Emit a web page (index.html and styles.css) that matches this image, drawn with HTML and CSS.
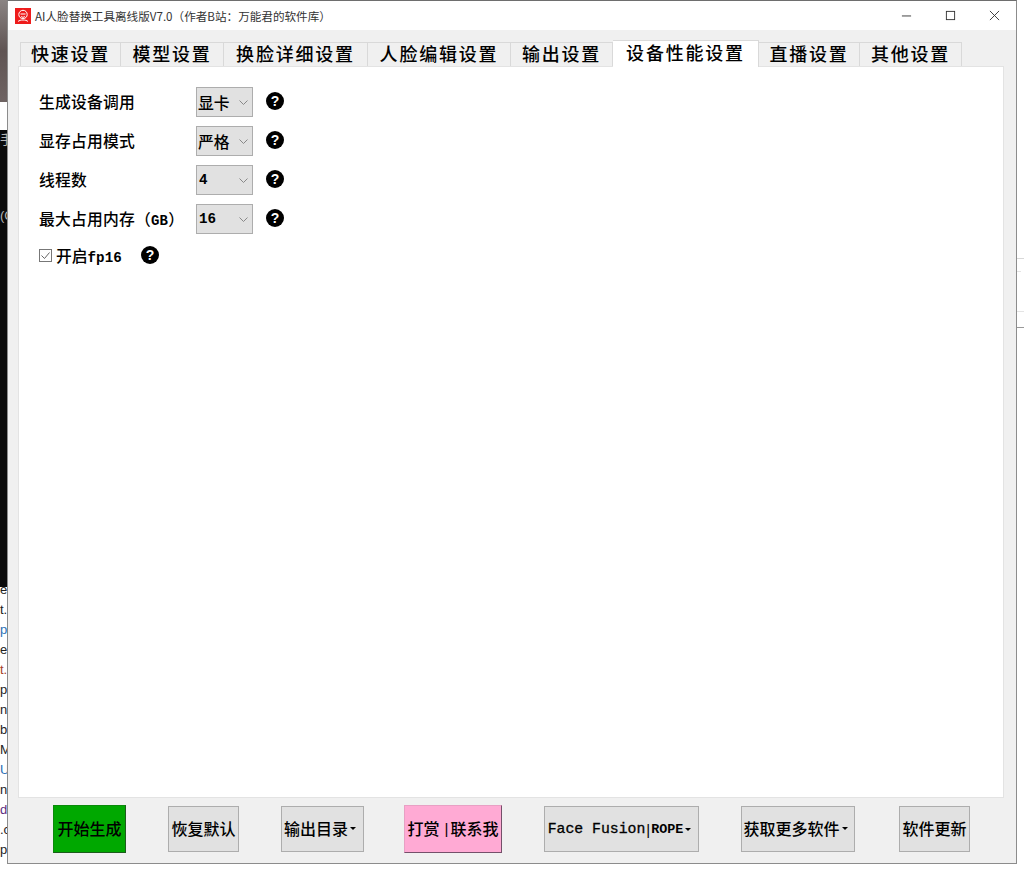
FILE: index.html
```html
<!DOCTYPE html>
<html lang="zh-CN">
<head>
<meta charset="utf-8">
<title>AI人脸替换工具离线版V7.0</title>
<link rel="stylesheet" href="styles.css">
</head>
<body>
<div class="desktop">
  <div class="strip">
    <div class="strip-top"></div>
    <div class="strip-white"></div>
    <div class="strip-black"><span>手</span><span class="gap">(C</span></div>
    <div class="strip-text">
      <span>e.</span><span>t.</span><span class="blue">p</span><span>e</span><span class="red">t.</span><span>pa</span><span>n.</span><span>bo</span><span>M</span><span class="blue">U</span><span>nt</span><span class="purple">dl</span><span>.c</span><span>p</span>
    </div>
  </div>
  <div class="side-lines">
    <i class="l1"></i><i class="l2"></i><i class="l3"></i><i class="l4"></i>
  </div>
</div>

<main class="window">
  <header class="titlebar">
    <svg class="app-icon" viewBox="0 0 16 16" aria-hidden="true">
      <rect width="16" height="16" fill="#ee1c1c"/>
      <circle cx="8" cy="6.5" r="4.2" fill="none" stroke="#fff" stroke-width="1"/>
      <path d="M5.5 6h5M6 8.5c1.2 1 2.8 1 4 0M3 13.5c2-2 8-2 10 0" fill="none" stroke="#fff" stroke-width="1"/>
    </svg>
    <span class="title">AI人脸替换工具离线版V7.0（作者B站：万能君的软件库）</span>
    <div class="controls">
      <svg viewBox="0 0 12 12"><path d="M1 6.5h10" stroke="#333" fill="none"/></svg>
      <svg viewBox="0 0 12 12"><rect x="1.5" y="1.5" width="9" height="9" stroke="#333" fill="none"/></svg>
      <svg viewBox="0 0 12 12"><path d="M1 1l10 10M11 1L1 11" stroke="#333" fill="none"/></svg>
    </div>
  </header>

  <div class="body">
    <nav class="tabs">
      <span class="tab w1">快速设置</span>
      <span class="tab w2">模型设置</span>
      <span class="tab w3">换脸详细设置</span>
      <span class="tab w4">人脸编辑设置</span>
      <span class="tab w5">输出设置</span>
      <span class="tab active">设备性能设置</span>
      <span class="tab w7">直播设置</span>
      <span class="tab w8">其他设置</span>
    </nav>

    <section class="panel">
      <div class="row">
        <span class="label">生成设备调用</span>
        <div class="select"><span>显卡</span><svg viewBox="0 0 9 5"><path d="M.5.5l4 4 4-4" fill="none" stroke="#888"/></svg></div>
        <span class="help">?</span>
      </div>
      <div class="row">
        <span class="label">显存占用模式</span>
        <div class="select"><span>严格</span><svg viewBox="0 0 9 5"><path d="M.5.5l4 4 4-4" fill="none" stroke="#888"/></svg></div>
        <span class="help">?</span>
      </div>
      <div class="row">
        <span class="label">线程数</span>
        <div class="select"><span class="num">4</span><svg viewBox="0 0 9 5"><path d="M.5.5l4 4 4-4" fill="none" stroke="#888"/></svg></div>
        <span class="help">?</span>
      </div>
      <div class="row">
        <span class="label">最大占用内存（<span class="mono-sm">GB</span>）</span>
        <div class="select"><span class="num">16</span><svg viewBox="0 0 9 5"><path d="M.5.5l4 4 4-4" fill="none" stroke="#888"/></svg></div>
        <span class="help">?</span>
      </div>
      <div class="check-row">
        <svg class="checkbox" viewBox="0 0 13 13"><rect x=".5" y=".5" width="12" height="12" fill="#fff" stroke="#777"/><path d="M2.5 6.5l3 3 5-6" fill="none" stroke="#666"/></svg>
        <span class="check-label">开启<span class="mono">fp16</span></span>
        <span class="help">?</span>
      </div>
    </section>

    <footer class="actions">
      <button class="btn start">开始生成</button>
      <button class="btn b-restore">恢复默认</button>
      <button class="btn b-output">输出目录<i class="caret"></i></button>
      <button class="btn pink">打赏<span class="bar">|</span>联系我</button>
      <button class="btn b-face"><span class="mono">Face Fusion</span><span class="bar">|</span><span class="rope">ROPE</span><i class="caret"></i></button>
      <button class="btn b-more">获取更多软件<i class="caret"></i></button>
      <button class="btn b-update">软件更新</button>
    </footer>
  </div>
</main>
</body>
</html>
```

FILE: styles.css
```css
* { box-sizing: border-box; }

html, body {
  margin: 0;
  height: 871px;
  overflow: hidden;
  background: #fff;
  font-family: "Noto Sans CJK SC", "Liberation Serif", sans-serif;
  color: #000;
}

.desktop { position: absolute; inset: 0; }

.strip {
  position: absolute;
  left: 0;
  top: 0;
  width: 8px;
  height: 863px;
  display: flex;
  flex-direction: column;
  overflow: hidden;
}
.strip-top {
  height: 102px;
  background: linear-gradient(#8a8483, #5f5453 50%, #6e6362);
  flex: none;
}
.strip-white { height: 28px; background: #fff; flex: none; }
.strip-black {
  height: 457px;
  flex: none;
  background: #0b0b0b;
  color: #b5b5b5;
  font: 13px/16px "Liberation Sans", sans-serif;
  padding-top: 2px;
  display: flex;
  flex-direction: column;
}
.strip-black .gap { margin-top: 60px; }
.strip-text {
  flex: 1;
  display: flex;
  flex-direction: column;
  font: 13px/20px "Liberation Sans", sans-serif;
  color: #222;
  margin-top: -7px;
}
.strip-text span { white-space: nowrap; }
.strip-text .blue { color: #2a6fb5; }
.strip-text .red { color: #a5402a; }
.strip-text .purple { color: #5b2a80; }

.side-lines i {
  position: absolute;
  left: 1017px;
  width: 7px;
  height: 1px;
  background: #e4e4e4;
}
.side-lines .l1 { top: 258px; background: #d8d8d8; }
.side-lines .l2 { top: 271px; width: 4px; }
.side-lines .l3 { top: 311px; }
.side-lines .l4 { top: 327px; background: #999; }

.window {
  position: absolute;
  left: 7px;
  top: 0;
  width: 1010px;
  height: 864px;
  background: #f0f0f0;
  border: 1px solid #8c8c8c;
  border-top-color: #6e6e6e;
  display: flex;
  flex-direction: column;
}

.titlebar {
  height: 29px;
  flex: none;
  background: #fff;
  display: flex;
  align-items: center;
  padding-left: 7px;
}
.app-icon { width: 16px; height: 16px; flex: none; }
.title {
  margin-left: 4px;
  font-size: 11.6px;
  line-height: 26px;
  color: #333;
  font-family: "Noto Sans CJK SC", "Liberation Sans", sans-serif;
  white-space: nowrap;
}
.controls {
  margin-left: auto;
  display: flex;
  gap: 33px;
  padding-right: 16px;
  align-items: center;
}
.controls svg { width: 11px; height: 11px; display: block; }

.body { flex: 1; display: flex; flex-direction: column; min-height: 0; }

.tabs {
  display: flex;
  align-items: flex-end;
  height: 36px;
  padding-left: 12px;
  position: relative;
  z-index: 1;
  flex: none;
}
.tab {
  height: 24px;
  background: #f0f0f0;
  border: 1px solid #d9d9d9;
  border-bottom: 0;
  border-left-width: 0;
  font-size: 18px;
  line-height: 20px;
  letter-spacing: 1.8px;
  font-weight: 500;
  text-align: center;
  white-space: nowrap;
}
.tab.w1 { width: 101px; border-left-width: 1px; }
.tab.w2 { width: 103px; }
.tab.w3 { width: 144px; }
.tab.w4 { width: 143px; }
.tab.w5 { width: 102px; }
.tab.active {
  width: 146px;
  height: 27px;
  background: #fff;
  margin-bottom: -1px;
  line-height: 23px;
}
.tab.w7 { width: 101px; }
.tab.w8 { width: 102px; }

.panel {
  width: 986px;
  height: 732px;
  margin-left: 10px;
  background: #fff;
  border: 1px solid #e3e3e3;
  padding: 20px 0 0 20px;
  flex: none;
}

.row {
  display: flex;
  align-items: center;
  height: 30px;
  margin-bottom: 9px;
}
.label {
  width: 157px;
  padding-bottom: 2px;
  font-size: 15.8px;
  font-weight: 500;
  letter-spacing: .2px;
  white-space: nowrap;
  flex: none;
}
.mono-sm { font: bold 14px "Liberation Mono", monospace; }

.select {
  width: 57px;
  height: 30px;
  background: #e1e1e1;
  border: 1px solid #adadad;
  display: flex;
  align-items: center;
  justify-content: space-between;
  padding: 0 4px 0 1px;
  font-size: 15.8px;
  font-weight: 500;
  flex: none;
}
.select svg { width: 9px; height: 5px; flex: none; }
.select .num { font: bold 14.2px "Liberation Mono", monospace; margin-left: 1px; }

.help {
  width: 18px;
  height: 18px;
  border-radius: 50%;
  background: #000;
  color: #fff;
  font: bold 14px/18px "Liberation Sans", sans-serif;
  text-align: center;
  margin-left: 13px;
  margin-top: -2px;
  flex: none;
}

.check-row {
  display: flex;
  align-items: center;
  height: 24px;
  margin-top: 4px;
}
.checkbox { width: 13px; height: 13px; flex: none; }
.check-label {
  margin-left: 4px;
  font-size: 15.8px;
  font-weight: 500;
  width: 71px;
  white-space: nowrap;
  flex: none;
}
.check-row .help { margin-left: 14px; margin-top: -1px; }
.mono { font: bold 14.2px "Liberation Mono", monospace; }

.actions {
  display: flex;
  align-items: center;
  height: 62px;
  padding-left: 45px;
  flex: none;
}
.btn {
  height: 46px;
  background: #e1e1e1;
  border: 1px solid #adadad;
  padding: 0 0 2px;
  font-family: inherit;
  font-size: 16px;
  font-weight: 500;
  color: #000;
  display: flex;
  align-items: center;
  justify-content: center;
  white-space: nowrap;
  flex: none;
}
.btn.start {
  width: 73px;
  height: 48px;
  background: #00a800;
  border: 1px solid #0a8a0a;
  border-right-color: #1c5c1c;
  border-bottom-color: #1c5c1c;
}
.b-restore { width: 71px; margin-left: 42px; }
.btn.b-output { width: 83px; margin-left: 42px; padding-right: 5px; }
.btn.pink {
  width: 98px;
  height: 48px;
  margin-left: 40px;
  background: #ffaad4;
  border: 1px solid #e8a0c4;
  border-right-color: #74506a;
  border-bottom-color: #74506a;
}
.btn.b-face { width: 155px; margin-left: 42px; padding: 0 4px 0 0; }
.btn.b-more { width: 114px; margin-left: 42px; padding-right: 5px; }
.b-update { width: 71px; margin-left: 44px; }
.b-face .mono { font-size: 14.8px; font-weight: 400; white-space: pre; -webkit-text-stroke: .3px #000; }
.rope { font: bold 13.4px "Liberation Mono", monospace; }
.bar { font: 15px "Liberation Sans", sans-serif; margin: 0 2px 0 5px; }
.b-face .bar { margin: 0 1px; }
.caret {
  width: 0;
  height: 0;
  margin-left: 2px;
  border: 3.5px solid transparent;
  border-top: 3.5px solid #000;
  border-bottom: 0;
}
```
